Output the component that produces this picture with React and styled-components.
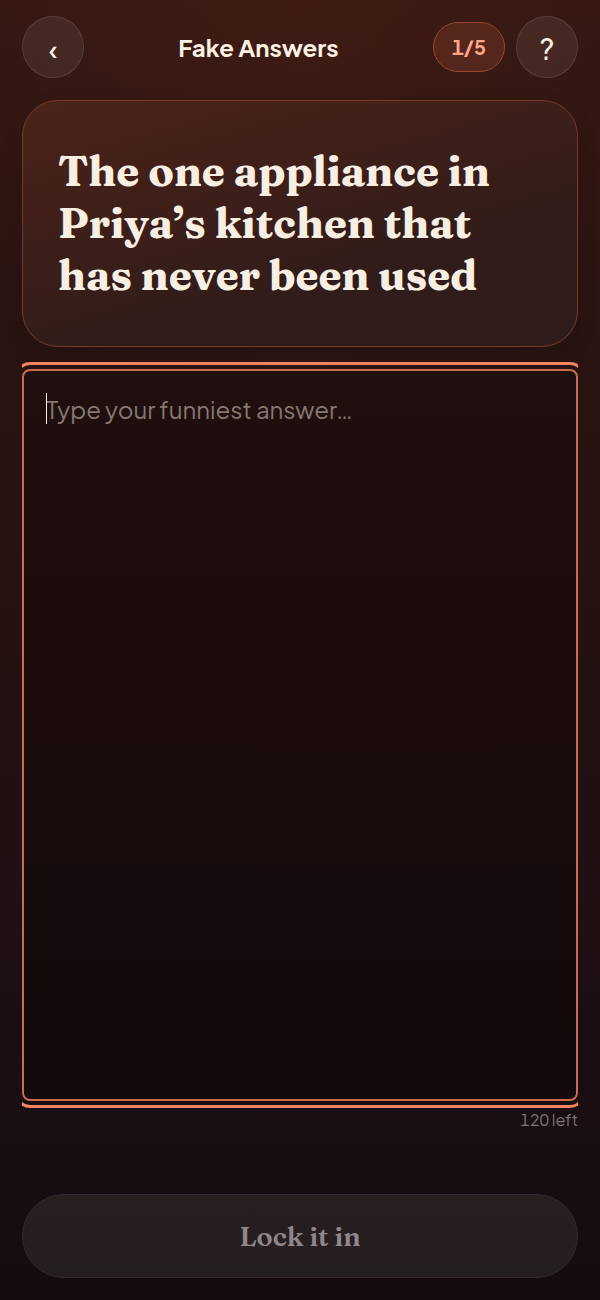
import React, { useState } from 'react';
import styled, { createGlobalStyle } from 'styled-components';

const MAX_LENGTH = 120;

const GlobalStyle = createGlobalStyle`
  * {
    box-sizing: border-box;
  }

  body {
    margin: 0;
    background: #160c11;
    color: #fdf1e3;
    font-family: 'Plus Jakarta Sans', Inter, 'Liberation Sans', sans-serif;
  }

  button,
  textarea {
    font: inherit;
    color: inherit;
  }
`;

const Screen = styled.form`
  min-height: 100vh;
  padding: 16px 22px 22px;
  display: flex;
  flex-direction: column;
  background:
    radial-gradient(ellipse 70% 36% at 50% 0%, rgba(110, 45, 30, 0.2), transparent),
    linear-gradient(180deg, #331711 0%, #2a1411 22%, #261211 46%, #1c0f13 78%, #140b11 100%);
`;

const Header = styled.header`
  display: flex;
  align-items: center;
  gap: 11px;
  margin-bottom: 22px;
`;

const RoundButton = styled.button`
  width: 62px;
  height: 62px;
  flex-shrink: 0;
  padding: 3px 0 0;
  border: 1px solid rgba(255, 255, 255, 0.1);
  border-radius: 50%;
  background: rgba(255, 255, 255, 0.07);
  font-size: 28px;
  font-weight: 500;
  line-height: 32px;
  cursor: pointer;
`;

const Title = styled.h1`
  flex: 1;
  margin: 0;
  font-size: 24px;
  line-height: 30px;
  font-weight: 700;
  text-align: center;
`;

const Round = styled.span`
  padding: 0 18px;
  border: 1px solid #984730;
  border-radius: 25px;
  background: #55261b;
  color: #ffa78b;
  font-size: 20px;
  line-height: 48px;
  font-weight: 700;
  font-variant-numeric: tabular-nums;
`;

const PromptCard = styled.section`
  padding: 44px 35px 45px;
  border: 1px solid #743929;
  border-radius: 36px;
  background: linear-gradient(165deg, #4b2319 0%, #3d1f19 38%, #301c19 68%, #301d1b 100%);
  box-shadow: 0 8px 20px rgba(0, 0, 0, 0.15);
`;

const Prompt = styled.h2`
  margin: 0;
  color: #f8eee1;
  font-family: Fraunces, 'Liberation Serif', serif;
  font-size: 42px;
  line-height: 52px;
  font-weight: 700;
`;

const AnswerBox = styled.div`
  flex: 1;
  display: flex;
  position: relative;
  margin-top: 22px;
  overflow-x: clip;
`;

const Answer = styled.textarea`
  flex: 1;
  min-width: 0;
  min-height: 200px;
  padding: 22px;
  border: 2px solid #cb6b4f;
  border-radius: 8px;
  outline: 3px solid #f4845f;
  outline-offset: 4px;
  background: linear-gradient(180deg, #1f0f0e 0%, #1b0c0b 40%, #120a0d 100%);
  font-size: 24px;
  line-height: 32px;
  resize: none;
  caret-color: ${({ $empty }) => ($empty ? 'transparent' : '#fdf1e3')};

  &::placeholder {
    color: #877873;
    opacity: 1;
  }
`;

const Caret = styled.span`
  position: absolute;
  top: 24px;
  left: 24px;
  width: 1px;
  height: 31px;
  background: #fdf1e3;
  pointer-events: none;
`;

const Remaining = styled.p`
  margin: 9px 0 64px;
  color: #7f7375;
  font-size: 16px;
  line-height: 20px;
  text-align: right;
  font-variant-numeric: tabular-nums;
`;

const SubmitButton = styled.button`
  height: 84px;
  border: 1px solid #352a2e;
  border-radius: 42px;
  background: linear-gradient(180deg, #291d20, #241e22);
  color: #91878a;
  font-family: Fraunces, 'Liberation Serif', serif;
  font-size: 27px;
  font-weight: 600;
`;

export default function App() {
  const [answer, setAnswer] = useState('');

  return (
    <>
      <GlobalStyle />
      <Screen onSubmit={(event) => event.preventDefault()}>
        <Header>
          <RoundButton type="button" aria-label="Back">‹</RoundButton>
          <Title>Fake Answers</Title>
          <Round>1/5</Round>
          <RoundButton type="button" aria-label="Help">?</RoundButton>
        </Header>
        <PromptCard>
          <Prompt id="prompt">The one appliance in Priya’s kitchen that has never been used</Prompt>
        </PromptCard>
        <AnswerBox>
          <Answer
            $empty={answer === ''}
            aria-labelledby="prompt"
            placeholder="Type your funniest answer…"
            maxLength={MAX_LENGTH}
            value={answer}
            onChange={(event) => setAnswer(event.target.value)}
            autoFocus
          />
          {answer === '' && <Caret />}
        </AnswerBox>
        <Remaining>{MAX_LENGTH - answer.length} left</Remaining>
        <SubmitButton type="submit" disabled={answer.trim() === ''}>Lock it in</SubmitButton>
      </Screen>
    </>
  );
}
